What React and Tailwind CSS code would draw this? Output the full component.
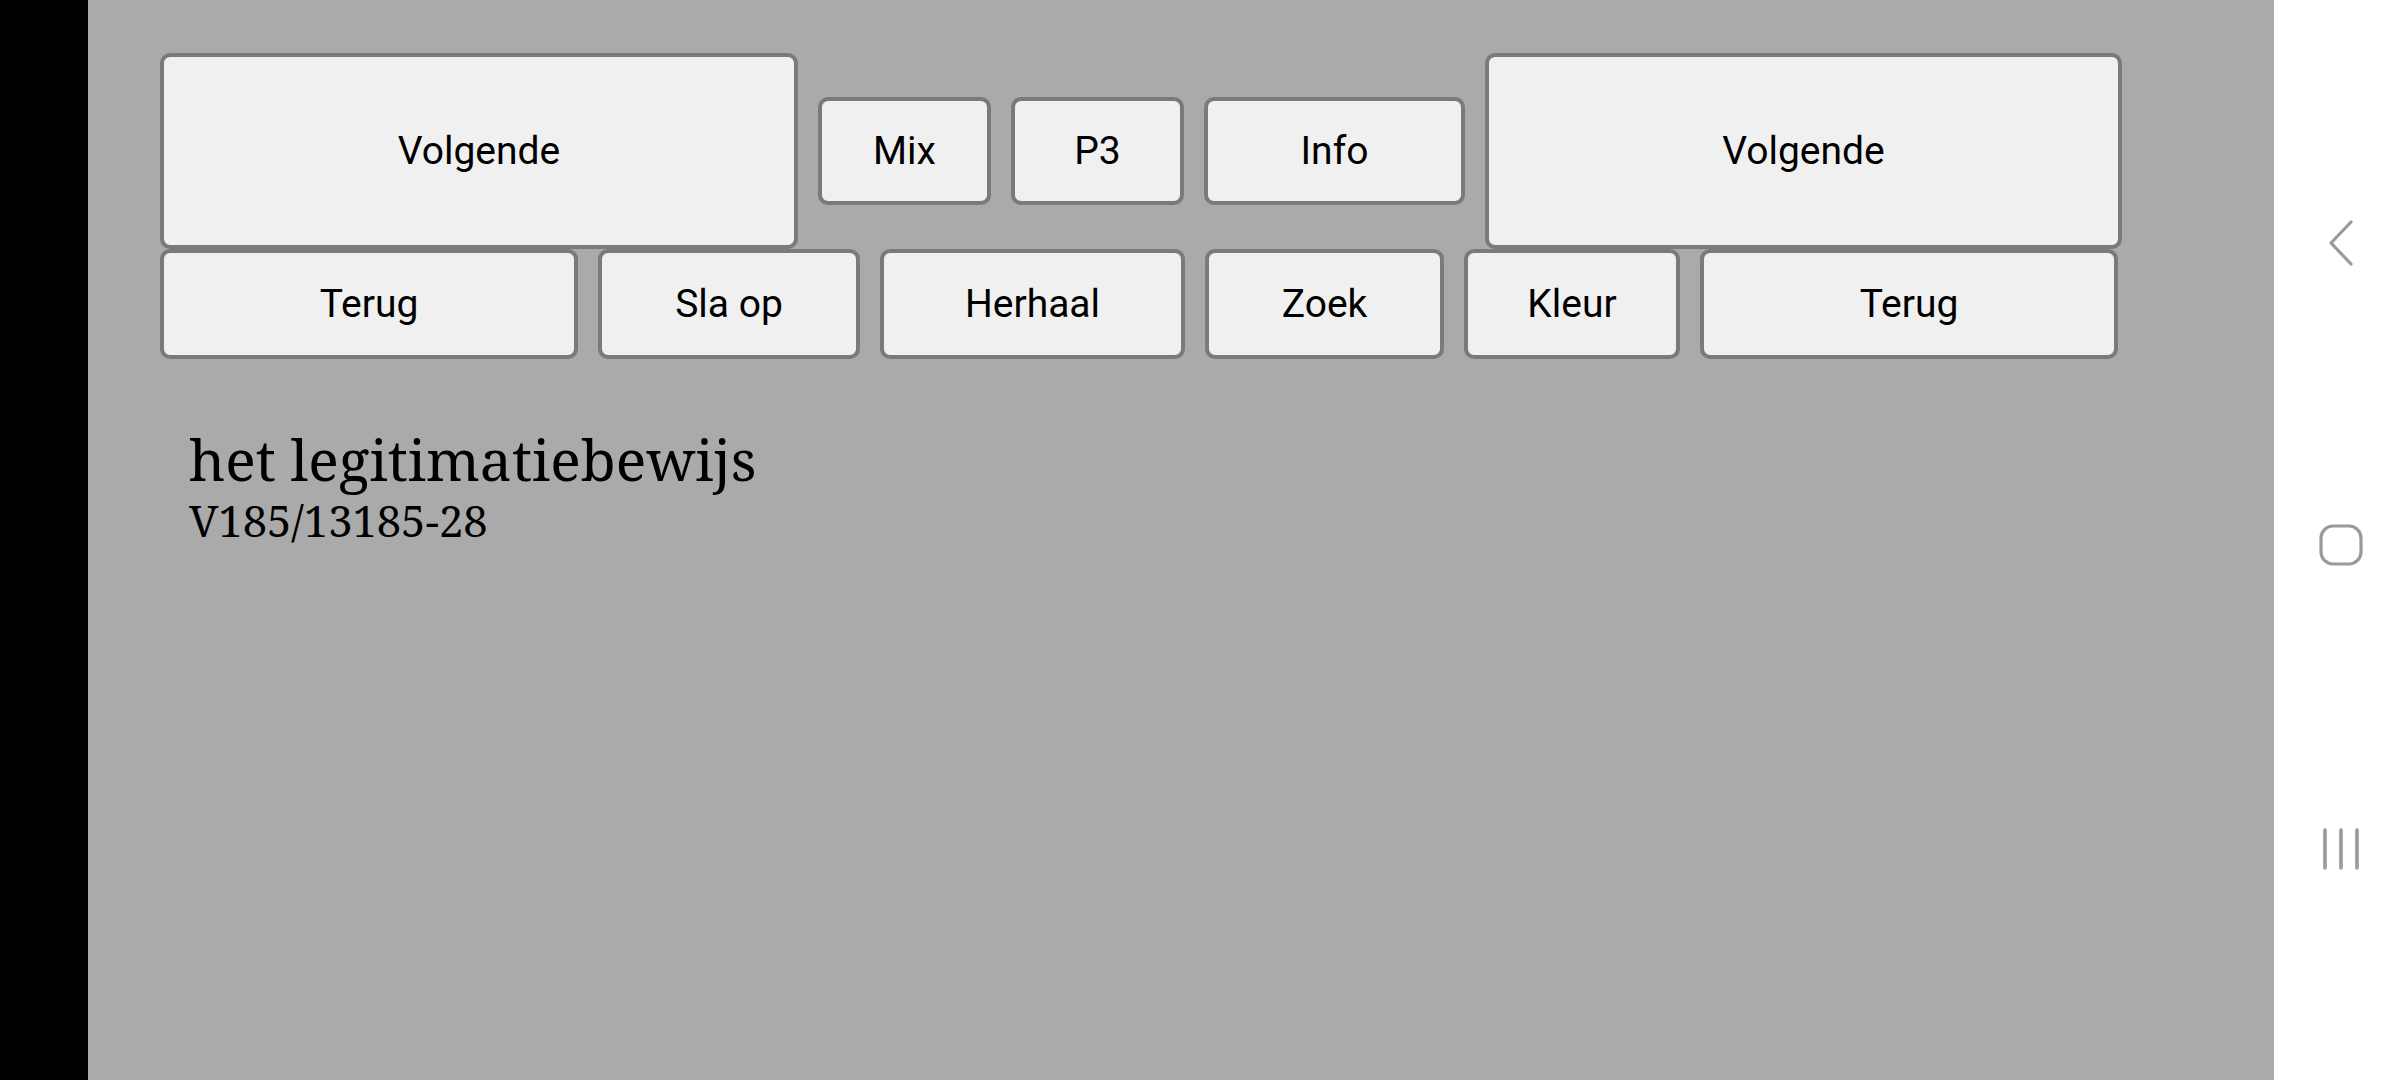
import React from 'react';

const topRow = [
  { label: 'Volgende', w: 'w-[638px]', h: 'h-[196px]' },
  { label: 'Mix', w: 'w-[173px]', h: 'h-[108px]' },
  { label: 'P3', w: 'w-[173px]', h: 'h-[108px]' },
  { label: 'Info', w: 'w-[261px]', h: 'h-[108px]' },
  { label: 'Volgende', w: 'w-[637px]', h: 'h-[196px]' },
];

const bottomRow = [
  { label: 'Terug', w: 'w-[418px]' },
  { label: 'Sla op', w: 'w-[262px]' },
  { label: 'Herhaal', w: 'w-[305px]' },
  { label: 'Zoek', w: 'w-[239px]' },
  { label: 'Kleur', w: 'w-[216px]' },
  { label: 'Terug', w: 'w-[418px]' },
];

const Knop = ({ label, className }) => (
  <button
    className={`flex items-center justify-center shrink-0 rounded-[10px] border-[4px] border-[#7a7a7a] bg-[#f0f0f0] text-[39px] text-black font-['Roboto',sans-serif] ${className}`}
  >
    {label}
  </button>
);

const App = () => {
  return (
    <div className="flex h-[1080px] w-[2400px] overflow-hidden bg-[#aaaaaa]">
      {/* zwarte rand links */}
      <div className="w-[88px] shrink-0 bg-black"></div>

      {/* hoofdscherm */}
      <div className="flex-1 pl-[72px] pt-[53px]">
        <div className="flex items-center gap-[20px]">
          {topRow.map((b, i) => (
            <Knop key={i} label={b.label} className={`${b.w} ${b.h}`} />
          ))}
        </div>
        <div className="flex gap-[20px]">
          {bottomRow.map((b, i) => (
            <Knop key={i} label={b.label} className={`${b.w} h-[110px]`} />
          ))}
        </div>

        <div className="pl-[29px] pt-[64px] font-['Noto_Serif','DejaVu_Serif',serif] text-black">
          <div className="text-[57px] leading-[72px]">het legitimatiebewijs</div>
          <div className="text-[43.5px] leading-[50px]">V185/13185-28</div>
        </div>
      </div>

      {/* navigatiebalk */}
      <div className="flex w-[126px] shrink-0 flex-col items-center bg-white pl-[8px] pt-[220px]">
        <svg width="30" height="46" viewBox="0 0 30 46">
          <path d="M25 2 L5 23 L25 44" fill="none" stroke="#9a9a9a" strokeWidth="3.2" strokeLinecap="round" strokeLinejoin="round" />
        </svg>
        <svg width="44" height="42" viewBox="0 0 44 42" className="mt-[258px]">
          <rect x="2" y="2" width="40" height="38" rx="12" fill="none" stroke="#9a9a9a" strokeWidth="3.2" />
        </svg>
        <svg width="40" height="42" viewBox="0 0 40 42" className="mt-[262px]">
          <path d="M4 2 V40 M20 2 V40 M36 2 V40" fill="none" stroke="#9a9a9a" strokeWidth="3.6" strokeLinecap="round" />
        </svg>
      </div>
    </div>
  );
};

export default App;
